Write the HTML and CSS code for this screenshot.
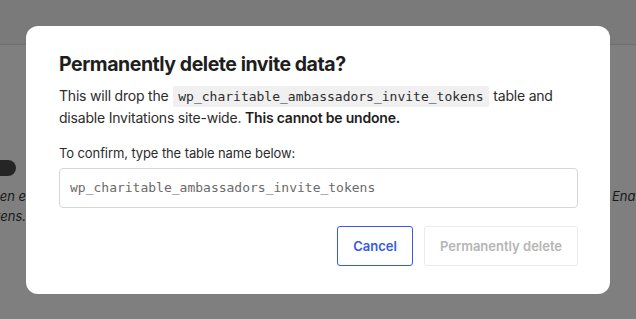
FILE: index.html
```html
<!DOCTYPE html>
<html lang="en">
<head>
<meta charset="utf-8">
<title>Delete invite data</title>
<link rel="stylesheet" href="styles.css">
</head>
<body>
<div class="page">
  <header class="page-header"></header>
  <div class="page-body">
    <div class="setting setting-left">
      <span class="toggle"></span>
      <p class="hint">Tokens are deleted when e<br>tokens.</p>
    </div>
    <div class="setting setting-right">
      <p class="hint">Enable invitations</p>
    </div>
  </div>
</div>

<div class="overlay">
  <div class="modal" role="dialog" aria-labelledby="modal-title">
    <h2 class="modal-title" id="modal-title">Permanently delete invite data?</h2>
    <p class="modal-text">This will drop the <code class="chip">wp_charitable_ambassadors_invite_tokens</code> table and disable Invitations site-wide. <strong>This cannot be undone.</strong></p>
    <label class="field-label" for="confirm">To confirm, type the table name below:</label>
    <input class="field-input" id="confirm" type="text" placeholder="wp_charitable_ambassadors_invite_tokens">
    <div class="actions">
      <button class="btn btn-secondary" type="button">Cancel</button>
      <button class="btn btn-danger" type="button" disabled>Permanently delete</button>
    </div>
  </div>
</div>
</body>
</html>
```

FILE: styles.css
```css
* { box-sizing: border-box; }

html, body {
  margin: 0;
  padding: 0;
  height: 100%;
}

body {
  font-family: Inter, "Noto Sans", "Liberation Sans", sans-serif;
  background: #fff;
  color: #1e1e1e;
  overflow: hidden;
}

.page {
  height: 100%;
  overflow: hidden;
}

.page-header {
  height: 45px;
  background: #f4f4f4;
  border-bottom: 1px solid #dcdcdc;
}

.page-body {
  display: flex;
  justify-content: space-between;
  padding-top: 115px;
}

.setting {
  display: flex;
  flex-direction: column;
}

.setting-left {
  margin-left: -60px;
  width: 86px;
  align-items: flex-end;
}

.toggle {
  display: block;
  width: 36px;
  height: 16px;
  border-radius: 8px;
  background: #4a4a4a;
  align-self: flex-end;
  margin-right: 10px;
}

.hint {
  margin: 10px 0 0;
  font-size: 13px;
  line-height: 20px;
  font-style: italic;
  color: #333;
  white-space: nowrap;
  text-align: right;
}

.setting-right {
  width: 24px;
  padding-top: 16px;
}

.setting-right .hint {
  text-align: left;
  margin-top: 10px;
}

.overlay {
  position: fixed;
  inset: 0;
  background: rgba(0, 0, 0, 0.5);
  display: flex;
  align-items: center;
  justify-content: center;
}

.modal {
  width: 584px;
  background: #fff;
  border-radius: 12px;
  padding: 25px 32px 28px 33px;
  display: flex;
  flex-direction: column;
}

.modal-title {
  margin: 0;
  font-size: 19.5px;
  line-height: 26px;
  font-weight: 700;
  letter-spacing: -0.45px;
  color: #1e1e1e;
}

.modal-text {
  margin: 8px 0 0;
  font-size: 14px;
  line-height: 21px;
  letter-spacing: -0.2px;
  color: #2c2c2c;
}

.modal-text strong {
  font-weight: 600;
  color: #1e1e1e;
}

.chip {
  font-family: "DejaVu Sans Mono", "Liberation Mono", monospace;
  font-size: 13px;
  letter-spacing: 0;
  background: #f0f0f0;
  color: #2c2c2c;
  padding: 3px 5px;
  border-radius: 2px;
  margin: 0 1px;
}

.field-label {
  margin-top: 16px;
  font-size: 13px;
  line-height: 18px;
  letter-spacing: -0.1px;
  color: #2c2c2c;
}

.field-input {
  margin-top: 6px;
  height: 40px;
  width: 100%;
  border: 1px solid #d6d6d6;
  border-radius: 4px;
  padding: 0 10px;
  font-family: "DejaVu Sans Mono", "Liberation Mono", monospace;
  font-size: 13px;
  color: #1e1e1e;
  background: #fff;
}

.field-input::placeholder {
  color: #6b6b6b;
}

.actions {
  margin-top: 18px;
  display: flex;
  justify-content: flex-end;
  gap: 11px;
}

.btn {
  height: 40px;
  border-radius: 3px;
  background: #fff;
  font-family: Inter, "Noto Sans", "Liberation Sans", sans-serif;
  font-size: 13px;
  font-weight: 600;
  cursor: pointer;
}

.btn-secondary {
  width: 76px;
  border: 1px solid #3858e9;
  color: #3858e9;
}

.btn-danger {
  width: 154px;
  border: 1px solid #ebebeb;
  color: #b5b5b5;
  cursor: default;
}
```
